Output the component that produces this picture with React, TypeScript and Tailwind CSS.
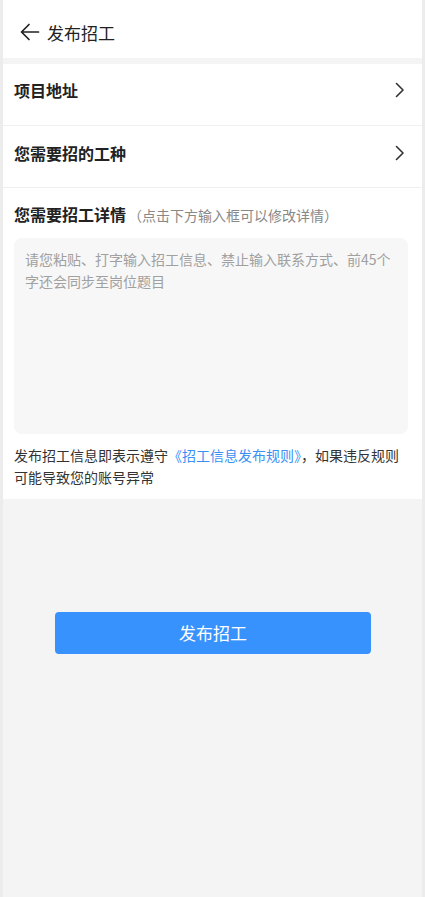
import React from 'react';

function Chevron() {
  return (
    <svg width="10" height="16" viewBox="0 0 10 16" fill="none" className="mr-[2px]">
      <path d="M1.5 1.5 L8 8 L1.5 14.5" stroke="#333" strokeWidth="1.6" strokeLinecap="round" strokeLinejoin="round" />
    </svg>
  );
}

export default function App() {
  return (
    <div
      className="min-h-[897px] bg-[#ececec] px-[3px] text-[#222]"
      style={{ fontFamily: '"Noto Sans CJK SC", "Noto Sans", sans-serif' }}
    >
      <div className="min-h-[897px] bg-[#f4f4f4]">
        {/* header */}
        <div className="h-[58px] bg-white flex items-center pl-[17px] pt-[6px]">
          <svg width="20" height="18" viewBox="0 0 20 18" fill="none">
            <path d="M18.5 9 H2 M9 1.5 L1.5 9 L9 16.5" stroke="#222" strokeWidth="1.7" strokeLinecap="round" strokeLinejoin="round" />
          </svg>
          <span className="ml-[7px] text-[17px] leading-none">发布招工</span>
        </div>

        <div className="mt-[6px] bg-white">
          <div className="h-[62px] flex items-center justify-between pl-[11px] pr-[15px] pb-[10px] border-b border-[#f0f0f0]">
            <span className="text-[16px] font-semibold">项目地址</span>
            <Chevron />
          </div>
          <div className="h-[62px] flex items-center justify-between pl-[11px] pr-[15px] pb-[8px] border-b border-[#f0f0f0]">
            <span className="text-[16px] font-semibold">您需要招的工种</span>
            <Chevron />
          </div>

          <div className="pl-[11px] pr-[14px] pt-[14px] pb-[11px]">
            <div className="flex items-baseline">
              <span className="text-[16px] font-semibold">您需要招工详情</span>
              <span className="text-[14px] text-[#888] ml-[2px]">（点击下方输入框可以修改详情）</span>
            </div>
            <div className="mt-[12px] h-[196px] bg-[#f7f7f7] rounded-[8px] px-[11px] pt-[10px] text-[14px] leading-[22px] text-[#a0a0a0]">
              请您粘贴、打字输入招工信息、禁止输入联系方式、前45个字还会同步至岗位题目
            </div>
            <p className="mt-[10px] text-[14px] leading-[22px] text-[#333]">
              发布招工信息即表示遵守<span className="text-[#3b8ff5]">《招工信息发布规则》</span>，如果违反规则可能导致您的账号异常
            </p>
          </div>
        </div>

        <div className="flex pl-[52px] pt-[113px]">
          <button className="w-[316px] h-[42px] rounded-[4px] bg-[#3892fd] text-white text-[17px]">
            发布招工
          </button>
        </div>
      </div>
    </div>
  );
}
